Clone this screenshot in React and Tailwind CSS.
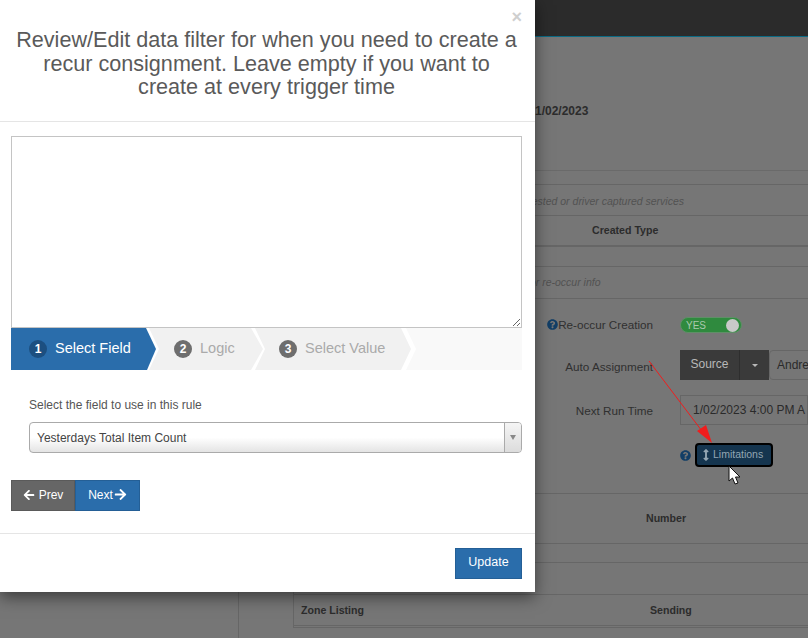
import React from "react";
import { FaArrowLeft, FaArrowRight, FaArrowsAltV, FaQuestionCircle } from "react-icons/fa";

const Step = ({ num, label, className, circle, text }) => (
  <div className={`h-[42px] flex items-center ${className}`}>
    <span className={`w-[18px] h-[18px] rounded-full flex items-center justify-center text-white text-[12px] font-bold ${circle}`}>
      {num}
    </span>
    <span className={`ml-[8px] text-[14.5px] ${text}`}>{label}</span>
  </div>
);

const Background = () => (
  <div className="text-[12px] text-[#2c2c2c]">
    <div className="h-[37px] bg-[#2b2b2b] border-b border-[#0b6a84]" />
    <div className="ml-[238px] border-l border-[#666] h-[601px]">
      <div className="h-[134px] border-b border-[#6a6a6a] pl-[296px] pt-[65px] font-bold">1/02/2023</div>
      <div className="h-[14px] border-b border-[#666]" />
      <div className="h-[31px] border-b border-[#666] flex items-center justify-end w-[570px] pr-[125px] pt-[3px] italic text-[10.5px] text-[#525252]">
        Requested or driver captured services
      </div>
      <div className="h-[31px] border-b-2 border-[#666] pl-[353px] pt-[1px] flex items-center font-bold text-[10.6px]">Created Type</div>
      <div className="h-[20px] border-b border-[#666]" />
      <div className="h-[32px] border-b border-[#666] pl-[288px] pt-[1px] flex items-center italic text-[10.5px] text-[#525252]">
        for re-occur info
      </div>
      <div className="h-[195px] border-b border-[#666] pt-[16px] text-[11.7px]">
        <div className="flex items-center h-[20px]">
          <div className="w-[414px] shrink-0 flex justify-end items-center text-[#303030]">
            <FaQuestionCircle className="text-[#123e66] text-[11px]" />
            Re-occur Creation
          </div>
          <div className="ml-[27px] w-[62px] h-[16px] rounded-full bg-[#2f8a3e] border border-[#5f8f67] flex items-center justify-between pl-[5px] pr-[2px] text-[10px] text-[#a9c9ae]">
            YES
            <span className="w-[13px] h-[13px] rounded-full bg-[#c9c9c9]" />
          </div>
        </div>
        <div className="flex items-center h-[30px] mt-[15px]">
          <div className="w-[414px] shrink-0 text-right pt-[4px] text-[#303030]">Auto Assignment</div>
          <div className="ml-[27px] flex h-[30px] items-stretch">
            <div className="w-[60px] bg-[#3a3a3a] text-[#b8b8b8] flex items-center justify-center border-r border-[#2e2e2e] text-[12px] pb-[2px]">Source</div>
            <div className="w-[29px] bg-[#3a3a3a] flex items-center justify-center">
              <span className="border-x-[3px] border-x-transparent border-t-[3px] border-t-[#b8b8b8]" />
            </div>
            <div className="w-[60px] border border-[#666] rounded-l-[4px] pl-[7px] flex items-center text-[12px] text-[#2a2a2a]">Andre</div>
          </div>
        </div>
        <div className="flex items-center h-[30px] mt-[15px]">
          <div className="w-[414px] shrink-0 text-right pt-[2px] text-[#303030]">Next Run Time</div>
          <div className="ml-[27px] w-[140px] h-[30px] border border-[#666] pl-[12px] flex items-center whitespace-nowrap overflow-hidden text-[12px] text-[#2a2a2a]">
            1/02/2023 4:00 PM A
          </div>
        </div>
        <div className="flex items-center h-[24px] mt-[18px] ml-[441px]">
          <FaQuestionCircle className="text-[#123e66] text-[11px]" />
          <div className="ml-[4px] w-[78px] h-[24px] bg-[#15354f] border-2 border-black rounded-[4px] flex items-center pl-[3px] text-[10.5px] text-[#93a6b3]">
            <FaArrowsAltV className="text-[#93a6b3] text-[12px]" />
            <span className="ml-[1px]">Limitations</span>
          </div>
        </div>
      </div>
      <div className="ml-[54px] h-[50px] border-b border-l border-[#666] flex items-center font-bold text-[10.6px] pl-[352px]">Number</div>
      <div className="ml-[54px] h-[19px] border-b border-l border-[#666]" />
      <div className="ml-[54px] h-[32px] border-b border-l border-[#666]" />
      <div className="ml-[54px] h-[33px] border-b-[3px] border-double border-l border-[#666] pt-[2px] flex items-center font-bold text-[10.6px] pl-[7px]">
        <span className="w-[349px]">Zone Listing</span>
        <span>Sending</span>
      </div>
    </div>
  </div>
);

const Modal = () => (
  <div className="absolute left-0 top-0 w-[535px] h-[592px] bg-white shadow-[0_5px_15px_rgba(0,0,0,0.5)] text-[#555]">
    <div className="h-[122px] border-b border-[#e5e5e5] pl-[11px] pr-[13px] pt-[8px]">
      <div className="text-right text-[#cfcfcf] text-[18px] font-bold leading-[18px]">×</div>
      <h4 className="text-center text-[21.6px] leading-[23.6px] text-[#5a5a5a] mt-[2px]">
        Review/Edit data filter for when you need to create a recur consignment. Leave empty if you want to create at every trigger time
      </h4>
    </div>
    <div className="px-[11px] pt-[14px] pr-[13px]">
      <textarea className="block w-full h-[192px] border border-[#c4c4c4] outline-none" />
      <div className="flex bg-white overflow-hidden">
        <Step
          num="1"
          label="Select Field"
          className="w-[145px] pl-[18px] bg-[#2a6dab] [clip-path:polygon(0_0,135px_0,100%_50%,136px_100%,0_100%)]"
          circle="bg-[#1c4f80]"
          text="text-white"
        />
        <Step
          num="2"
          label="Logic"
          className="w-[114px] -ml-[7px] pl-[25px] bg-[#f1f1f1] [clip-path:polygon(0_0,102px_0,100%_50%,102px_100%,0_100%,10px_50%)]"
          circle="bg-[#6e6e6e]"
          text="text-[#aaaaaa]"
        />
        <Step
          num="3"
          label="Select Value"
          className="w-[156px] -ml-[8px] pl-[24px] bg-[#f1f1f1] [clip-path:polygon(0_0,146px_0,100%_50%,146px_100%,0_100%,10px_50%)]"
          circle="bg-[#6e6e6e]"
          text="text-[#aaaaaa]"
        />
        <div className="flex-1 -ml-[5px] h-[42px] bg-[#f9f9f9] [clip-path:polygon(0_0,100%_0,100%_100%,0_100%,10px_50%)]" />
      </div>
      <div className="pl-[18px] pt-[28px] text-[12px] text-[#555]">
        <div className="leading-[14px]">Select the field to use in this rule</div>
        <div className="mt-[10px] h-[31px] flex border border-[#aaa] rounded-[4px] overflow-hidden bg-gradient-to-b from-white from-50% to-[#e4e4e4]">
          <div className="flex-1 flex items-center pl-[7px] text-[#444]">Yesterdays Total Item Count</div>
          <div className="w-[17px] border-l border-[#aaa] flex items-center justify-center bg-gradient-to-b from-[#f5f5f5] to-[#dcdcdc]">
            <span className="border-x-[3px] border-x-transparent border-t-[5px] border-t-[#888]" />
          </div>
        </div>
      </div>
      <div className="flex mt-[27px] text-[12px] text-white">
        <button className="w-[64px] h-[31px] bg-[#666] border border-[#5a5a5a] flex items-center justify-center gap-[4px] pb-[2px]">
          <FaArrowLeft className="text-[12px]" />
          Prev
        </button>
        <button className="w-[65px] h-[31px] bg-[#2a6dab] border border-[#245f96] flex items-center justify-center pb-[2px]">
          Next
          <FaArrowRight className="text-[13px] ml-[1px]" />
        </button>
      </div>
    </div>
    <div className="mt-[22px] border-t border-[#e5e5e5] pt-[14px] pr-[13px] flex justify-end">
      <button className="w-[67px] h-[31px] bg-[#2a6dab] border border-[#245f96] text-white text-[12.5px] pb-[2px]">Update</button>
    </div>
  </div>
);

export default function App() {
  return (
    <div className="relative w-[808px] h-[638px] overflow-hidden bg-[#767676] font-['Liberation_Sans',Arial,sans-serif]">
      <Background />
      <Modal />
      {/* screenshot annotation arrow + mouse pointer */}
      <svg className="absolute left-[640px] top-[355px]" width="110" height="135" viewBox="0 0 110 135">
        <line x1="9" y1="6" x2="68" y2="84" stroke="#f01d1d" strokeWidth="1" />
        <path d="M72 88 L57 76 L66 70 Z" fill="#f01d1d" />
        <path d="M89 111 L89 126 L92.5 123 L95 129 L98 128 L95.5 122 L100 122 Z" fill="#fff" stroke="#111" strokeWidth="1" />
      </svg>
    </div>
  );
}
